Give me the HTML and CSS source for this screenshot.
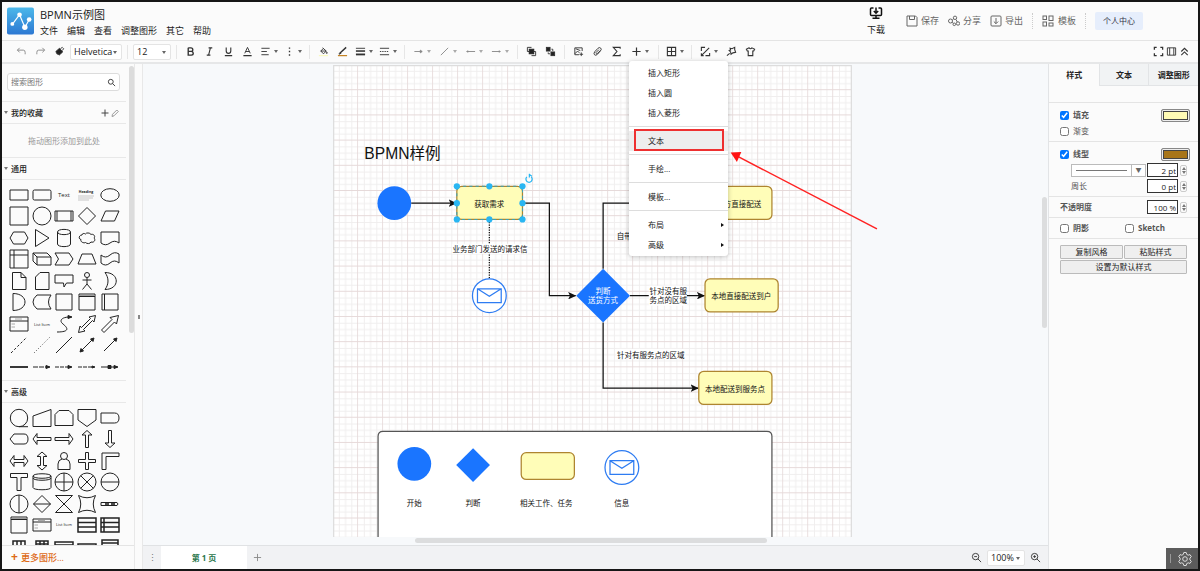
FILE: index.html
```html
<!DOCTYPE html>
<html lang="zh-CN">
<head>
<meta charset="utf-8">
<title>BPMN示例图</title>
<link rel="stylesheet" href="styles.css">
</head>
<body>
<header class="header">
  <svg class="logo" viewBox="0 0 28 28" aria-hidden="true">
    <defs><linearGradient id="lg" x1="0" y1="0" x2="0" y2="1"><stop offset="0" stop-color="#4cb8ea"/><stop offset="1" stop-color="#2c78d2"/></linearGradient></defs>
    <rect width="28" height="28" rx="2" fill="url(#lg)"/>
    <path d="M5.500 17.500L13 7.500L18.500 20.500L23.500 12" fill="none" stroke="#fff" stroke-width="1.200"/>
    <g fill="#fff"><circle cx="5.500" cy="17" r="2"/><circle cx="13" cy="7.500" r="2.400"/><circle cx="18.500" cy="20.500" r="2.800"/><circle cx="23" cy="12.500" r="2.400"/></g>
  </svg>
  <div class="heading">
    <h1 class="title">BPMN示例图</h1>
    <nav class="menubar">
      <a href="#">文件</a><a href="#">编辑</a><a href="#">查看</a><a href="#">调整图形</a><a href="#">其它</a><a href="#">帮助</a>
    </nav>
  </div>
  <div class="actions">
    <button class="download"><svg viewBox="0 0 14 14"><path d="M4.500 2H2.500Q1.500 2 1.500 3V8.500Q1.500 9.500 2.500 9.500H11.500Q12.500 9.500 12.500 8.500V3Q12.500 2 11.500 2H9.500M7 1.500V7M4.800 5L7 7.200L9.200 5M7 9.500V12M3.500 12.300H10.500" stroke-width="1.500"/></svg>下载</button>
    <button class="action"><svg viewBox="0 0 12 12"><path d="M1 1H9.500L11 2.500V11H1zM3.500 1V4.500H8.500V1"/></svg>保存</button>
    <button class="action"><svg viewBox="0 0 12 12"><circle cx="2.500" cy="6" r="2"/><circle cx="7" cy="2.800" r="1.700"/><circle cx="10" cy="8.500" r="1.700"/><circle cx="6.300" cy="9.300" r="1.300"/><path d="M4.300 5L5.500 4M4.300 7.200L5.300 8.400M8 4.500L9.300 7"/></svg>分享</button>
    <button class="action"><svg viewBox="0 0 12 12"><rect x="1" y="1" width="10" height="10" rx="1"/><path d="M6 3V8.500M3.800 6.500L6 8.700L8.200 6.500"/></svg>导出</button>
    <span class="dots-sep"></span>
    <button class="action template"><svg viewBox="0 0 12 12"><rect x="1" y="1" width="3.500" height="3.500"/><rect x="7" y="1" width="4" height="4.500"/><rect x="1" y="7" width="3.500" height="4"/><rect x="7" y="8" width="4" height="3"/></svg>模板</button>
    <span class="dots-sep"></span>
    <button class="account">个人中心</button>
  </div>
</header>

<div class="toolbar">
  <button class="tool dim" aria-label="撤销"><svg viewBox="0 0 12 12"><path d="M4 2L1.500 4.500L4 7M1.500 4.500H8Q10 4.500 10 7V9"/></svg></button>
  <button class="tool dim" aria-label="重做"><svg viewBox="0 0 12 12"><path d="M8 2L10.500 4.500L8 7M10.500 4.500H4Q2 4.500 2 7V9"/></svg></button>
  <button class="tool" aria-label="格式刷"><svg viewBox="0 0 12 12"><path d="M2 6L6 2.500L9.500 6.500L5.500 10L4.500 8.500L3.500 9z" fill="#222"/><path d="M7 3L9 1.500L10.500 3L9 5"/></svg></button>
  <span class="pick font"><select aria-label="字体"><option>Helvetica</option></select></span>
  <span class="sep"></span>
  <span class="pick size"><select aria-label="字号"><option>12</option></select></span>
  <span class="sep"></span>
  <button class="tool" aria-label="粗体"><svg viewBox="0 0 12 12"><path d="M3.500 2H6.500Q8.500 2 8.500 4T6.500 5.800H3.500M3.500 2V10H7Q9 10 9 8T7 5.800" stroke-width="1.500"/></svg></button>
  <button class="tool" aria-label="斜体"><svg viewBox="0 0 12 12"><path d="M5 2H9M3 10H7M7 2L5 10" stroke-width="1.200"/></svg></button>
  <button class="tool" aria-label="下划线"><svg viewBox="0 0 12 12"><path d="M3.500 1.500V5.500Q3.500 8 6 8T8.500 5.500V1.500M2 10.500H10" stroke-width="1.200"/></svg></button>
  <button class="tool" aria-label="字体颜色"><svg viewBox="0 0 12 12"><path d="M3 8L6 1.500L9 8M4 6H8" /><path d="M1.500 10.500H10.500" stroke-width="1.400"/></svg></button>
  <button class="tool drop" aria-label="对齐"><svg viewBox="0 0 12 12"><path d="M1.500 2.500H10.500M1.500 6H7.500M1.500 9.500H9.500"/></svg></button>
  <button class="tool drop" aria-label="更多格式"><svg viewBox="0 0 12 12"><path d="M6 1.500V3M6 5.300V6.800M6 9V10.500" stroke-width="1.500"/></svg></button>
  <span class="sep"></span>
  <button class="tool" aria-label="填充颜色"><svg viewBox="0 0 12 12"><path d="M5 2L9 5.500L6 8.500L3 5.500L6 2.500M3 5.500H9"/><circle cx="9.600" cy="7.500" r=".6"/><path d="M1 10.500H11" stroke="#fafab0"/></svg></button>
  <button class="tool" aria-label="线条颜色"><svg viewBox="0 0 12 12"><path d="M3 8L10 1.500M2 9L4.500 7.500" stroke-width="1.500"/><path d="M1 10.500H11" stroke="#c27f1e" stroke-width="1.300"/></svg></button>
  <button class="tool drop" aria-label="线宽"><svg viewBox="0 0 12 12"><path d="M1 2.500H11" /><path d="M1 5.500H11" stroke-width="1.700"/><path d="M1 9.200H11" stroke-width="2"/></svg></button>
  <button class="tool drop" aria-label="线型"><svg viewBox="0 0 12 12"><path d="M1 2.500H11M1 9.500H11"/><path d="M1 6H11" stroke-dasharray="1.500 1"/></svg></button>
  <span class="sep"></span>
  <button class="tool drop dim wide" aria-label="连接线"><svg viewBox="0 0 12 12"><path d="M1.500 6H10M8 4.500L10 6L8 7.500z" fill="#999"/></svg></button>
  <button class="tool drop dim wide" aria-label="航点"><svg viewBox="0 0 12 12"><path d="M2 10L10 2"/></svg></button>
  <button class="tool drop dim wide" aria-label="起点"><svg viewBox="0 0 12 12"><path d="M1.500 6H11M3 4.800V7.200"/></svg></button>
  <button class="tool drop dim wide" aria-label="终点"><svg viewBox="0 0 12 12"><path d="M1 6H10.500M9 4.800V7.200"/></svg></button>
  <span class="sep"></span>
  <button class="tool" aria-label="移至最前"><svg viewBox="0 0 12 12"><path d="M6 1.500H1.500V6H3.500M6 10.500H10.500V6H8.500"/><rect x="3.500" y="3.500" width="5" height="5" fill="#222" stroke="#222"/></svg></button>
  <button class="tool" aria-label="移至最后"><svg viewBox="0 0 12 12"><rect x="1.500" y="1.500" width="4" height="4" fill="#222"/><rect x="6.500" y="6.500" width="4" height="4" fill="#222"/><path d="M7 3.500H8.500V5.500M3.500 7V8.500H5.500"/></svg></button>
  <span class="sep"></span>
  <button class="tool" aria-label="插入图片"><svg viewBox="0 0 12 12"><path d="M10 5.500V2H2V9.500H6.500M2 8.500L5 5.500L7 7.500M9 7V11M7 9H11M3 3L8 5"/></svg></button>
  <button class="tool" aria-label="插入链接"><svg viewBox="0 0 12 12"><path d="M9.500 5L6 9Q4 11 2.700 9.500T3.200 6L6.500 2.500Q8 1 9.500 2.300T9 5.200L6 8Q5 9 4.500 8T5 6.500L7.500 4"/></svg></button>
  <button class="tool" aria-label="数学公式"><svg viewBox="0 0 12 12"><path d="M10 3V1.500H2.500L6.500 6L2.500 10.500H10V9" stroke-width="1.200"/></svg></button>
  <div class="insert">
    <button class="tool drop widest" aria-label="插入" aria-expanded="true"><svg viewBox="0 0 12 12"><path d="M6 1.500V10.500M1.500 6H10.500" stroke-width="1.300"/></svg></button>
    <div class="menu" role="menu">
      <button role="menuitem">插入矩形</button>
      <button role="menuitem">插入圆</button>
      <button role="menuitem">插入菱形</button>
      <hr>
      <button role="menuitem" class="current">文本</button>
      <hr>
      <button role="menuitem">手绘...</button>
      <hr>
      <button role="menuitem">模板...</button>
      <hr>
      <button role="menuitem" class="sub">布局</button>
      <button role="menuitem" class="sub">高级</button>
    </div>
  </div>
  <span class="sep"></span>
  <button class="tool drop" aria-label="表格"><svg viewBox="0 0 12 12"><path d="M1.500 1.500H10.500V10.500H1.500zM6 1.500V10.500M1.500 6H10.500" stroke-width="1.200"/></svg></button>
  <span class="sep"></span>
  <button class="tool drop wide" aria-label="变换"><svg viewBox="0 0 12 12"><path d="M1.500 5.500V1.500H5.500M10.500 7.500V10.500H6M2 10L10 2M1.500 8V10.500H4" stroke-width="1.200"/></svg></button>
  <button class="tool" aria-label="套索"><svg viewBox="0 0 12 12"><path d="M1 10.500L4 8M4.500 2.500L6.500 3L9.500 1.500L9.500 4L10.500 7L7.500 7.500L5.500 9L5 6.500L3.500 5L5 4.500z" stroke-width="1.200"/></svg></button>
  <button class="tool" aria-label="主题"><svg viewBox="0 0 12 12"><path d="M4.500 2L1.500 3.500L2.500 5.500H3.500V10.500H8.500V5.500H9.500L10.500 3.500L7.500 2Q6 4 4.500 2z" stroke-width="1.200"/></svg></button>
  <div class="view-tools">
    <button aria-label="全屏"><svg viewBox="0 0 12 12"><path d="M1.500 4V1.500H4M8 1.500H10.500V4M10.500 8V10.500H8M4 10.500H1.500V8" stroke-width="1.400"/></svg></button>
    <button aria-label="格式面板"><svg viewBox="0 0 12 12"><path d="M1.500 2H10.500V10H1.500zM4 2V10M8.500 2V10"/></svg></button>
    <button aria-label="折叠"><svg viewBox="0 0 12 12"><path d="M2.500 6L6 2.500L9.500 6M2.500 10L6 6.500L9.500 10" stroke-width="1.200"/></svg></button>
  </div>
</div>

<main class="workspace">
  <aside class="sidebar">
    <div class="palettes">
      <div class="palette-list">
        <label class="search"><input type="text" placeholder="搜索图形" aria-label="搜索图形"><svg viewBox="0 0 10 10"><circle cx="4.200" cy="4.200" r="2.700"/><path d="M6.200 6.200L9 9"/></svg></label>
        <h2 class="section">我的收藏<span class="tools"><svg viewBox="0 0 10 10"><path d="M5 1.500V8.500M1.500 5H8.500" stroke="#444"/></svg><svg viewBox="0 0 10 10"><path d="M2 8.500L2.500 6.300L6.800 2L8.300 3.500L4 7.800z" stroke="#999"/></svg></span></h2>
        <p class="empty">拖动图形添加到此处</p>
        <h2 class="section">通用</h2>
        <div class="shapes" id="general"></div>
        <h2 class="section">高级</h2>
        <div class="shapes" id="advanced"></div>
      </div>
      <span class="scroll-thumb"></span>
    </div>
    <button class="more"><b>+</b>更多图形...</button>
  </aside>
  <div class="splitter"><span></span></div>

  <section class="center">
    <div class="stage">
      <svg class="paper" viewBox="0 0 830 755">
        <defs>
          <pattern id="grid" width="40" height="40.300" patternUnits="userSpaceOnUse">
            <path d="M10 0V40.300M20 0V40.300M30 0V40.300M0 10H40M0 20H40M0 30H40" stroke="#f0eeee" stroke-width="1.600" fill="none"/>
            <path d="M39.500 0V40.300M0 39.500H40" stroke="#e6d9d9" stroke-width="1.600" fill="none"/>
          </pattern>
          <marker id="tip" markerWidth="14" markerHeight="12" refX="12" refY="6" orient="auto" markerUnits="userSpaceOnUse"><path d="M0 0L13 6L0 12L3 6z" fill="#111"/></marker>
          <g id="mail"><circle r="27" fill="#fff"/><path d="M-19 -11H19V11H-19zL0 1L19 -11"/></g>
        </defs>
        <rect width="830" height="755" fill="#fff"/>
        <rect width="830" height="755" fill="url(#grid)"/>
        <path d="M1 755V1H829V755" class="page-edge"/>
        <text x="50" y="151" class="name">BPMN样例</text>

        <g class="flow">
          <path d="M125 221H197" marker-end="url(#tip)"/>
          <path d="M303 221H346V369H388" marker-end="url(#tip)"/>
          <path d="M432 326V221H584" marker-end="url(#tip)"/>
          <path d="M475 369H594" marker-end="url(#tip)"/>
          <path d="M432 412V517H584" marker-end="url(#tip)"/>
          <path d="M250 251V342" stroke-dasharray="2 2"/>
        </g>
        <g class="solid">
          <circle cx="98" cy="221" r="27"/>
          <path d="M432 326L475 369L432 412L389 369z"/>
        </g>
        <g class="task">
          <rect x="198" y="194" width="105" height="53" rx="8"/>
          <rect x="585" y="194" width="117" height="53" rx="8"/>
          <rect x="595" y="342" width="117" height="53" rx="8"/>
          <rect x="585" y="490" width="117" height="53" rx="8"/>
        </g>
        <use href="#mail" x="250" y="369" class="mail"/>
        <rect x="190" y="286" width="121" height="16" fill="#fff"/>
        <rect x="505" y="353" width="61" height="32" fill="#fff"/>
        <rect x="453" y="454" width="111" height="16" fill="#fff"/>
        <g class="caption">
          <text x="250" y="227">获取需求</text>
          <text x="251" y="299">业务部门发送的请求信</text>
          <text x="643" y="227">第三方直接配送</text>
          <text x="466" y="279">自带</text>
          <text x="536" y="366">针对没有服</text>
          <text x="536" y="381">务点的区域</text>
          <text x="653" y="375">本地直接配送到户</text>
          <text x="508" y="468">针对有服务点的区域</text>
          <text x="643" y="523">本地配送到服务点</text>
          <g fill="#fff"><text x="432" y="366">判断</text><text x="432" y="381">送货方式</text></g>
        </g>

        <rect x="198" y="194" width="105" height="53" fill="none" stroke="#3aa3b8" stroke-width="1.600" stroke-dasharray="5 5"/>
        <g fill="#29b6f2">
          <circle cx="198" cy="194" r="5"/><circle cx="250" cy="194" r="5"/><circle cx="303" cy="194" r="5"/>
          <circle cx="198" cy="221" r="5"/><circle cx="303" cy="221" r="5"/>
          <circle cx="198" cy="247" r="5"/><circle cx="250" cy="247" r="5"/><circle cx="303" cy="247" r="5"/>
        </g>
        <path d="M317 179A5 5 0 1 1 310 179M314 174V180M314 175L318 178" fill="none" stroke="#29b6f2" stroke-width="2"/>

        <path d="M72 755V594Q72 586 80 586H694Q702 586 702 594V755" fill="#fff" stroke="#555" stroke-width="2"/>
        <g class="solid"><circle cx="130" cy="638" r="27"/><path d="M224 613L251 640L224 667L197 640z"/></g>
        <rect x="301" y="620" width="85" height="43" rx="8" class="task"/>
        <use href="#mail" x="462" y="644" class="mail"/>
        <g class="caption"><text x="130" y="706">开始</text><text x="224" y="706">判断</text><text x="341" y="706">相关工作、任务</text><text x="462" y="706">信息</text></g>

        <path d="M870 262L645 145" stroke="#f22" stroke-width="2.400"/>
        <path d="M636 140L653 139L646 155z" fill="#f11"/>
      </svg>
      <span class="v-thumb"></span>
      <span class="h-thumb"></span>
    </div>
    <footer class="pages">
      <button class="page-menu" aria-label="页面">⋮</button>
      <button class="page-tab">第 1 页</button>
      <button class="page-add" aria-label="添加页面"><svg viewBox="0 0 10 10"><path d="M5 1V9M1 5H9"/></svg></button>
      <div class="zoom">
        <button aria-label="缩小"><svg viewBox="0 0 12 12"><circle cx="5" cy="5" r="3.500"/><path d="M7.500 7.500L11 11M3.500 5H6.500"/></svg></button>
        <span class="pick level"><select aria-label="缩放"><option>100%</option></select></span>
        <button aria-label="放大"><svg viewBox="0 0 12 12"><circle cx="5" cy="5" r="3.500"/><path d="M7.500 7.500L11 11M3.500 5H6.500M5 3.500V6.500"/></svg></button>
      </div>
    </footer>
  </section>

  <aside class="format">
    <div class="tabs" role="tablist"><button role="tab" class="on" aria-selected="true">样式</button><button role="tab">文本</button><button role="tab">调整图形</button></div>
    <div class="group blank"></div>
    <div class="group fills">
      <div class="row"><label><input type="checkbox" checked>填充</label><button class="swatch yellow" aria-label="填充颜色"></button></div>
      <div class="row"><label class="faint"><input type="checkbox">渐变</label></div>
    </div>
    <div class="group lines">
      <div class="row"><label><input type="checkbox" checked>线型</label><button class="swatch brown" aria-label="线条颜色"></button></div>
      <div class="row inset"><button class="line-style" aria-label="线条样式"><i></i><b>▼</b></button><input class="num" type="text" value="2 pt" aria-label="线宽"><span class="spin"></span></div>
      <div class="row inset"><label class="faint grow" for="perimeter">周长</label><input class="num" id="perimeter" type="text" value="0 pt"><span class="spin"></span></div>
    </div>
    <div class="group single"><div class="row"><label class="grow" for="opacity">不透明度</label><input class="num" id="opacity" type="text" value="100 %"><span class="spin"></span></div></div>
    <div class="group single"><div class="row halves"><label><input type="checkbox">阴影</label><label><input type="checkbox">Sketch</label></div></div>
    <div class="buttons"><button>复制风格</button><button>粘贴样式</button><button class="full">设置为默认样式</button></div>
    <button class="settings" aria-label="设置"><svg viewBox="0 0 16 16"><path d="M6.800 1.500H9.200L9.700 3.400L11.200 4.200L13 3.600L14.300 5.700L12.900 7.100V8.900L14.300 10.300L13 12.400L11.200 11.800L9.700 12.600L9.200 14.500H6.800L6.300 12.600L4.800 11.800L3 12.400L1.700 10.300L3.100 8.900V7.100L1.700 5.700L3 3.600L4.800 4.200L6.300 3.400z"/><circle cx="8" cy="8" r="2.300"/></svg></button>
  </aside>
</main>
<script src="shapes.js"></script>
</body>
</html>
```

FILE: styles.css
```css
* { box-sizing: border-box; }
html, body { height: 100%; }
body {
  margin: 0;
  border: 2px solid #161616;
  display: flex;
  flex-direction: column;
  overflow: hidden;
  background: #fbfbfb;
  color: #222;
  font: 9px/12px "Open Sans", "Noto Sans CJK SC", sans-serif;
}
button, input, select { font: inherit; color: inherit; }
button { border: 0; padding: 0; background: none; }
svg { display: block; flex: none; fill: none; stroke: #333; }
h1, h2, p { margin: 0; font-weight: 400; }

/* Header */
.header { display: flex; flex: none; height: 39px; padding: 0 55px 0 5px; border-bottom: 1px solid #e4e4e4; }
.logo { width: 27px; height: 28px; margin-top: 5px; stroke: none; }
.heading { padding: 5px 0 0 6px; }
.title { font-size: 11px; line-height: 16px; }
.menubar { display: flex; gap: 9px; padding-top: 2px; }
.menubar a { color: #222; text-decoration: none; }
.actions { margin-left: auto; display: flex; align-items: center; gap: 9px; color: #666; }
.download { display: flex; flex-direction: column; align-items: center; gap: 4px; margin-right: 12px; color: #222; }
.download svg { width: 14px; height: 14px; stroke: #111; }
.action { display: flex; align-items: center; gap: 3px; }
.action svg { width: 12px; height: 12px; stroke: #666; }
.template { gap: 4px; }
.dots-sep { height: 16px; border-left: 1px dotted #ccc; }
.account { padding: 3px 8px; border-radius: 2px; background: #e6eefc; color: #334; font-size: 8px; }

/* Toolbar */
.toolbar { display: flex; align-items: center; flex: none; height: 23px; padding: 0 8px 0 10px; border-bottom: 2px solid #e6e7e8; }
.tool { display: flex; align-items: center; justify-content: center; width: 19px; height: 20px; }
.tool svg { width: 11px; height: 11px; }
.dim svg { stroke: #888; }
.drop { width: 24px; gap: 3px; }
.drop::after, .pick::after { content: ""; border: 2px solid transparent; border-top: 3px solid #666; border-bottom: 0; }
.dim.drop::after { border-top-color: #aaa; }
.wide { width: 26px; }
.widest { width: 28px; }
.sep { width: 1px; height: 14px; margin: 0 4px; background: #e6e6e6; }
.pick { position: relative; display: flex; height: 16px; margin: 0 1px; border: 1px solid #e4e4e4; border-radius: 2px; background: #fff; }
.pick::after { position: absolute; right: 4px; top: 6px; }
.pick select { appearance: none; width: 100%; border: 0; padding: 0 3px; background: none; }
.font { width: 52px; }
.size { width: 38px; }
.insert { position: relative; }
.view-tools { display: flex; gap: 2px; margin-left: auto; }
.view-tools svg { width: 11px; height: 11px; }

.menu {
  position: absolute; z-index: 5; top: 19px; left: 3px; width: 99px; padding: 2px 0 1px;
  background: #fff; border-radius: 3px; box-shadow: 0 1px 5px rgba(0, 0, 0, .25); font-size: 8px;
}
.menu button { display: flex; align-items: center; width: 100%; height: 20px; padding: 0 4px 0 19px; text-align: left; }
.menu hr { height: 1px; margin: 3px 0 4px; border: 0; background: #ddd; }
.menu .current { position: relative; background: #ededed; }
.menu .current::after { content: ""; position: absolute; inset: -2px 4px 0 5px; border: 2px solid #ee3030; }
.menu .sub::after { content: ""; margin-left: auto; border: 2px solid transparent; border-left: 3px solid #111; border-right: 0; }

/* Workspace */
.workspace { display: flex; flex: 1; min-height: 0; }
.sidebar { display: flex; flex-direction: column; flex: none; width: 133px; border-right: 1px solid #e8e8e8; }
.palettes { display: flex; flex: 1; min-height: 0; justify-content: space-between; }
.palette-list { width: 124px; overflow: hidden; }
.scroll-thumb { width: 5px; height: 267px; margin-top: 2px; border-radius: 3px; background: #dcdcdc; }
.search { display: flex; align-items: center; height: 18px; margin: 9px 6px 10px 5px; padding: 0 3px; border: 1px solid #dcdcdc; border-radius: 3px; background: #fff; font-size: 8px; }
.search input { flex: 1; min-width: 0; border: 0; padding: 0; background: none; }
.search input::placeholder { color: #777; }
.search svg { width: 9px; height: 9px; }
.section { display: flex; align-items: center; height: 23px; border: 1px solid #e8e8e8; border-width: 1px 0; gap: 3px; padding: 0 6px 0 2px; font-size: 8px; font-weight: 500; }
.section::before { content: ""; border: 2px solid transparent; border-top: 3px solid #777; border-bottom: 0; }
.tools { display: flex; margin-left: auto; }
.tools svg { width: 10px; height: 10px; }
.empty { padding: 11px 0 10px; text-align: center; color: #999; font-size: 8px; }
.shapes { display: grid; grid-template-columns: repeat(5, 1fr); grid-auto-rows: 21px 22px; padding: 4px 5px 3px 6px; }
.shapes button { display: flex; align-items: center; justify-content: center; }
.shapes svg { width: 20px; height: 20px; stroke: #222; }
.shapes text { stroke: none; fill: #222; text-anchor: middle; }
.more { flex: none; height: 24px; border-top: 1px solid #e4e4e4; padding-left: 9px; text-align: left; color: #dd6a16; font-weight: 500; }
.more b { font-size: 12px; margin-right: 3px; }
.splitter { display: flex; align-items: center; justify-content: center; flex: none; width: 8px; border-right: 1px solid #e8e8e8; }
.splitter span { width: 2px; height: 4px; background: #888; }

.center { display: flex; flex-direction: column; flex: 1; min-width: 0; background: #f7f9fb; }
.stage { position: relative; display: flex; flex: 1; min-height: 0; justify-content: center; padding: 1px 7px 0 0; overflow: hidden; }
.paper { width: 519px; height: 472px; overflow: visible; stroke: none; }
.page-edge { stroke: #ddd; stroke-width: 2; }
.paper text { fill: inherit; font-family: "Liberation Sans", "Noto Sans CJK SC", sans-serif; }
.name { font-size: 25px; }
.paper .name { fill: #111; }
.caption { fill: #111; font-size: 12px; text-anchor: middle; }
.flow { stroke: #111; stroke-width: 2; }
.solid { fill: #1a75ff; }
.task { fill: #fffdb8; stroke: #ae8530; stroke-width: 2; }
.mail { stroke: #2e7cf2; stroke-width: 2; }
.v-thumb { position: absolute; right: 1px; top: 133px; width: 5px; height: 131px; border-radius: 3px; background: #dcddde; }
.h-thumb { position: absolute; bottom: 2px; left: 30%; width: 39%; height: 5px; border-radius: 3px; background: #dcddde; }

.pages { display: flex; align-items: center; flex: none; height: 24px; padding-right: 7px; border-top: 1px solid #e0e2e4; background: #f1f2f4; }
.page-menu { width: 18px; color: #777; }
.page-tab { align-self: stretch; width: 86px; background: #fff; color: #28754a; font-size: 8px; font-weight: 700; }
.page-add { width: 21px; display: flex; justify-content: center; }
.page-add svg { width: 9px; height: 9px; stroke: #888; }
.zoom { display: flex; align-items: center; gap: 4px; margin-left: auto; }
.zoom svg { width: 11px; height: 11px; }
.level { width: 38px; }

/* Format panel */
.format { position: relative; flex: none; width: 150px; border-left: 1px solid #e2e4e6; font-size: 8px; }
.tabs { display: grid; grid-template-columns: 1fr 1fr 1fr; height: 22px; font-weight: 700; }
.tabs button { border: 1px solid #e2e4e6; border-width: 0 0 1px 1px; background: #f1f3f4; white-space: nowrap; }
.tabs .on { border-color: transparent; background: none; }
.group { border-bottom: 1px solid #e4e4e4; padding-left: 11px; padding-right: 8px; }
.blank { height: 17px; }
.row { display: flex; align-items: center; height: 16px; }
.row label { display: flex; align-items: center; gap: 4px; font-weight: 700; color: #555; }
.row .faint { font-weight: 400; }
.row .grow { flex: 1; }
.row input[type="checkbox"] { width: 9px; height: 9px; margin: 0; }
.fills { padding-top: 4px; padding-bottom: 2px; }
.lines { padding-top: 4px; padding-bottom: 2px; }
.swatch { width: 29px; height: 13px; margin-left: auto; padding: 1px; border: 1px solid #888; border-radius: 2px; background: #eee content-box; box-shadow: inset 0 0 0 1px #eee, inset 0 0 0 2px #444; }
.yellow { background-color: #fffbb5; }
.brown { background-color: #a87518; }
.inset { padding-left: 11px; }
.line-style { display: flex; align-items: center; flex: 1; height: 13px; margin-right: 1px; border: 1px solid #bbb; background: #fff; }
.line-style i { flex: 1; height: 1px; margin: 0 4px; background: #777; }
.line-style b { width: 14px; height: 11px; border-left: 1px solid #bbb; color: #666; font-size: 6px; line-height: 11px; }
.num { width: 31px; height: 14px; padding: 0 1px; border: 1px solid #333; text-align: right; line-height: 12px; background: #fff; }
.spin { display: flex; flex-direction: column; align-items: center; justify-content: space-between; width: 7px; height: 11px; margin: 0 3px 0 2px; padding: 1px; border: 1px solid #ccc; border-radius: 2px; }
.spin::before, .spin::after { content: ""; border: 2px solid transparent; border-bottom: 3px solid #777; border-top: 0; }
.spin::after { border-top: 3px solid #777; border-bottom: 0; }
.single { padding-top: 2px; padding-bottom: 2px; }
.halves label { width: 53%; }
.buttons { display: grid; grid-template-columns: 1fr 1fr; gap: 1px; padding: 6px 11px; }
.buttons button { height: 14px; border: 1px solid #bbb; border-radius: 1px; background: #efefef; }
.buttons .full { grid-column: span 2; }
.settings { position: absolute; right: 0; bottom: 0; width: 32px; height: 21px; padding: 0 5px 0 11px; background: #5c5c5c; }
.settings::before { content: ""; position: absolute; left: 4px; top: 6px; height: 9px; border-left: 1px solid #999; }
.settings svg { width: 16px; height: 16px; stroke: #ddd; }
```

FILE: shapes.js
```js
const general = [
  'M1 5H19V15H1z',
  '<rect x="1" y="5" width="18" height="10" rx="1.500"/>',
  '<text x="10" y="12" font-size="6">Text</text>',
  '<text x="9" y="8" font-size="3.500" font-weight="700">Heading</text><path d="M1 11H17M1 13H16M1 15H12" stroke="#bbb" stroke-width=".8"/>',
  '<ellipse cx="10" cy="10" rx="9.200" ry="6.300"/>',
  'M1 1H19V19H1z',
  '<circle cx="10" cy="10" r="9"/>',
  'M1 5H19V15H1zM3 5V15M17 5V15',
  'M10 1.500L18.500 10L10 18.500L1.500 10z',
  'M5.500 5H19L14.500 15H1z',
  'M4.500 4H15.500L19 10L15.500 16H4.500L1 10z',
  'M3.500 1.500L17 10L3.500 18.500z',
  'M3.500 4V16C3.500 19.500 16.500 19.500 16.500 16V4C16.500 .5 3.500 .5 3.500 4C3.500 7.500 16.500 7.500 16.500 4',
  'M5 7C2 7 1 11 4 11.500C3 14 7 15.500 8.500 14.500C10 16 13 16 14 14C17 15 19 12 17 10C19 8 16 5.500 14 6.500C13 4.500 9 4.500 8.500 6C7 5 5 5.500 5 7z',
  'M1 4H19V15Q14.500 11.500 10 15T1 15z',
  'M1 1H19V19H1zM5 1V19M1 6H19',
  'M1 4H15L19 8V16H5L1 12zM1 4L5 8H19M5 8V16',
  'M1 4H15L19 10L15 16H1L4.500 10z',
  'M5 5H15L19 15H1z',
  'M1 6Q5.500 10 10 6T19 5V14Q14.500 10 10 14T1 14z',
  'M3.500 1.500H12L17 6.500V18.500H3.500zM12 1.500V6.500H17',
  'M8 1.500H17V18.500H3.500V6z',
  'M1 4H19V12H12.500L10 16L9.500 12H1z',
  '<circle cx="10" cy="4" r="2.500"/><path d="M10 6.500V13L5.500 18.500M10 13L14.500 18.500M5.500 9H14.500"/>',
  'M5 1.500C20 1.500 20 18.500 5 18.500C9 13 9 7 5 1.500z',
  'M4 1.500C20 1.500 20 18.500 4 18.500z',
  'M5 3H19Q14 10 19 17H5Q-3 10 5 3z',
  'M2 2H18V18H2z',
  '<path d="M2 2H18V18H2zM2 4.500H18"/><path d="M3 3.300H17" stroke="#888"/>',
  'M2 2H18V18H2zM4.500 2V18',
  '<path d="M1 3H19V17H1zM1 7H19"/><path d="M6 5H13M2.500 10H6M2.500 13H6" stroke="#aaa"/>',
  '<text x="10" y="12" font-size="4">List Item</text>',
  '<path d="M3 18C16 18 14 14 9 10C5 7 7 3 16 3"/><path d="M14 1.500L18 3L14 4.500z" fill="#222"/>',
  'M1.500 18.500L3 12L4.500 13.500L13.500 4.500L12 3L18.500 1.500L17 8L15.500 6.500L6.500 15.500L8 17z',
  'M1.500 16L12 5.500L10 3.500L18.500 1.500L16.500 10L14.500 8L4 18.500z',
  '<path d="M2 18L18 2" stroke-dasharray="2.500 2"/>',
  '<path d="M2 18L18 2" stroke-dasharray="1 2" stroke-width=".8"/>',
  'M2 18L18 2',
  '<path d="M4 16L16 4"/><path d="M3 17L4 13.500L6.500 16zM17 3L16 6.500L13.500 4z" fill="#222"/>',
  '<path d="M4 16L16 4"/><path d="M17 3L16 6.500L13.500 4z" fill="#222"/>',
  '<path d="M1 10H19" stroke-width="1.800"/>',
  '<path d="M1 10H15" stroke-dasharray="5 1"/><path d="M14 8.500L18 10L14 11.500z" fill="#222"/>',
  '<path d="M1 10H17" stroke-dasharray="4 1"/><path d="M14 8.500L18 10L14 11.500z" fill="#222"/>',
  '<path d="M1 10H17" stroke-dasharray="4 1"/><path d="M15 9L18 10L15 11z" fill="#222"/>',
  '<path d="M1 10H17"/><path d="M8 8.500H11V11.500H8zM14 8.500L18 10L14 11.500z" fill="#222"/>'
];
const advanced = [
  '<circle cx="10" cy="10" r="8.700"/><path d="M10 18.700H19"/>',
  'M1 8L19 1.500V18.500H1z',
  'M5 2.500H15L19 6.500V17.500H1V6.500z',
  'M1 1.500H19V12L10 18.500L1 12z',
  'M1 5H14.500Q19 5 19 10T14.500 15H1z',
  'M5 5H15Q19 5 19 10T15 15H5L1 10z',
  'M1 10L5 4.500V8.500H19V11.500H5V15.500z',
  'M19 10L15 4.500V8.500H1V11.500H15V15.500z',
  'M10 1.500L15 6H11.500V18.500H8.500V6H5z',
  'M10 18.500L15 14H11.500V1.500H8.500V14H5z',
  'M1 10L5 4.500V8.500H15V4.500L19 10L15 15.500V11.500H5V15.500z',
  'M10 1L15 5.500H11.500V14.500H15L10 19L5 14.500H8.500V5.500H5z',
  '<circle cx="10" cy="5" r="3.500"/><path d="M8 8Q4 9 4 13V18.500H16V13Q16 9 12 8"/>',
  'M8.500 1.500H11.500V8.500H18.500V11.500H11.500V18.500H8.500V11.500H1.500V8.500H8.500z',
  'M2 2H19V5.500H6V18.500H2z',
  'M1.500 1.500H18.500V5.500H12V18.500H8V5.500H1.500z',
  'M1 4V15.500C1 18.500 19 18.500 19 15.500V4C19 1 1 1 1 4C1 7 19 7 19 4M1 6C1 9 19 9 19 6',
  '<circle cx="10" cy="10" r="9"/><path d="M10 1V19M1 10H19"/>',
  '<circle cx="10" cy="10" r="9"/><path d="M3.600 3.600L16.400 16.400M16.400 3.600L3.600 16.400"/>',
  '<circle cx="10" cy="10" r="9"/><path d="M1 10H19"/>',
  '<circle cx="10" cy="10" r="9"/><path d="M10 1V19"/>',
  'M10 1.500L18.500 10L10 18.500L1.500 10zM1.500 10H18.500',
  'M1.500 1.500H18.500L1.500 18.500H18.500z',
  'M1.500 1.500Q10 6 18.500 1.500Q14 10 18.500 18.500Q10 14 1.500 18.500Q6 10 1.500 1.500z',
  '<path d="M1 8.500H17Q19 10 17 11.500H1z"/><path d="M6 8.500V11.500M8 8.500V11.500M12 8.500V11.500M14 8.500V11.500" stroke-width="1.600"/>',
  '<path d="M2 2H18V18H2zM2 4.500H18"/><path d="M3 3.300H17" stroke="#888"/>',
  '<path d="M1 4H19V16H1zM1 7H19"/><path d="M6 5.500H13M2.500 10H6M2.500 13H6" stroke="#aaa"/>',
  '<text x="10" y="11" font-size="4">List Item</text>',
  '<path d="M1 3H19V17H1zM1 7.500H19M1 12H19" stroke-width="1.500"/>',
  '<path d="M1 3H19V17H1zM1 7.500H19M1 12H19M4 3V17" stroke-width="1.500"/>',
  '<path d="M4 4H16V18H4zM8 4V18M12 4V18" stroke-width="1.500"/>',
  '<path d="M4 4H16V18H4zM8 4V18M12 4V18M4 7H16" stroke-width="1.500"/>',
  '<path d="M1 5H19V18H1zM1 8H19M5 10H15" stroke-width="1.500"/>',
  '<path d="M1 7H19V18H1zM12 10H19" stroke-width="1.500"/>',
  '<path d="M2 3H18V18H2zM2 6H18M7 10H13" stroke-width="1.500"/>'
];

function fill(id, shapes) {
  document.getElementById(id).innerHTML = shapes.map(s =>
    `<button aria-label="图形"><svg viewBox="0 0 20 20">${s[0] === '<' ? s : `<path d="${s}"/>`}</svg></button>`
  ).join('');
}
fill('general', general);
fill('advanced', advanced);
```
